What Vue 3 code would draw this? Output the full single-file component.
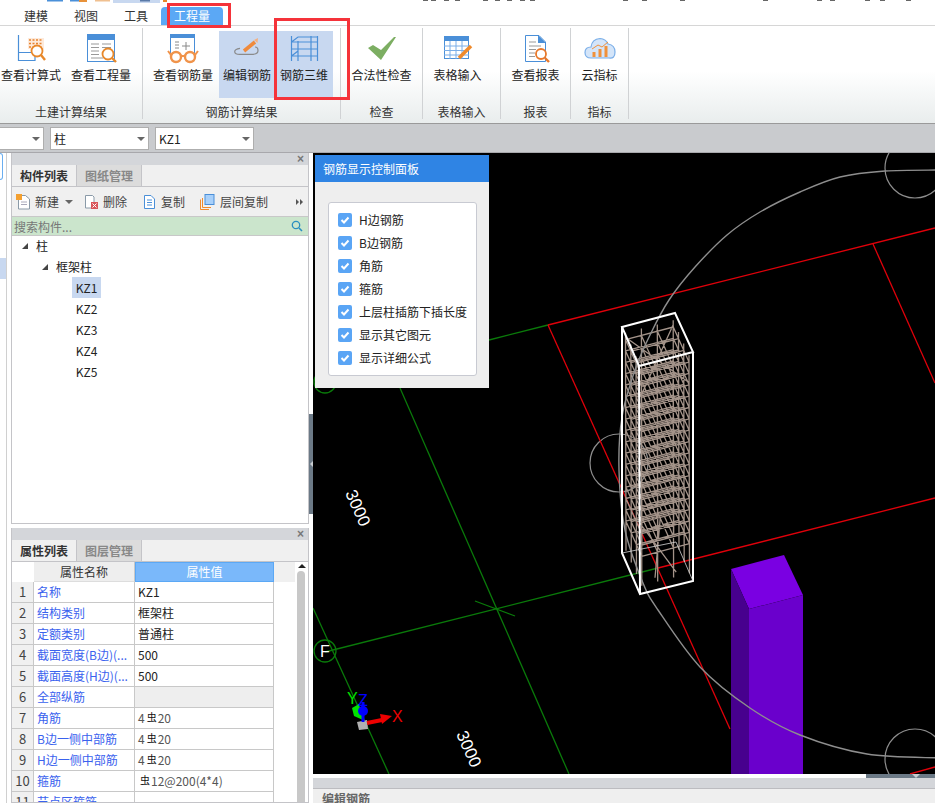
<template>
  <div class="app">
    <!-- 顶部被裁掉的标题栏残留 -->
    <svg class="title-strip" width="935" height="3" viewBox="0 0 935 3">
      <rect x="47" y="0" width="16" height="1.5" fill="#4a90d9" />
      <rect x="70" y="0" width="9" height="1.5" fill="#4a90d9" />
      <rect x="79" y="0" width="8" height="2" fill="#e8923a" />
      <rect x="95" y="0" width="15" height="1.5" fill="#f0c090" />
      <rect x="113" y="0" width="47" height="3" fill="#c8d8f0" />
      <rect x="140" y="0" width="10" height="1.5" fill="#5a7aa8" />
      <rect x="163" y="0" width="4" height="2" fill="#e8882a" />
      <rect v-for="s in titleBits" :key="s" :x="s" y="0" width="5" height="1" fill="#666" />
    </svg>

    <div class="tabs">
      <div v-for="t in tabs" :key="t" class="tab">{{ t }}</div>
      <div class="tab tab-active">工程量</div>
    </div>

    <div class="ribbon">
      <div class="rb-group g1">
        <div class="rb-btns">
          <div class="rb-btn w62">
            <svg class="ico" viewBox="0 0 32 32">
              <path d="M3.500 1V26.500H20V18.500H3.500" fill="none" stroke="#4a8fd8" stroke-width="1.200" />
              <rect x="13" y="4" width="16" height="11" fill="#fdeadb" />
              <path d="M14 6H28M14 9.500H28M14 13H28" stroke="#e8822e" stroke-width="1.600" stroke-dasharray="2 1.500" />
              <circle cx="22" cy="17" r="5.500" fill="#fff" stroke="#e8882a" stroke-width="1.800" />
              <path d="M26 21L30 26" stroke="#e8882a" stroke-width="2.400" />
            </svg>
            <span>查看计算式</span>
          </div>
          <div class="rb-btn w62">
            <svg class="ico" viewBox="0 0 32 32">
              <rect x="2.500" y="0.500" width="27" height="27" fill="#fff" stroke="#4a8fd8" />
              <rect x="2" y="0" width="28" height="6" fill="#4a8fd8" />
              <path d="M6 10H14M6 13.500H14M6 17H14M6 20.500H14M6 24H18M17 10H26M17 13.500H26" stroke="#999" />
              <circle cx="23" cy="20" r="5.500" fill="#fff" stroke="#e8882a" stroke-width="1.800" />
              <path d="M27 24L31 28" stroke="#e8882a" stroke-width="2.400" />
            </svg>
            <span>查看工程量</span>
          </div>
        </div>
        <div class="rb-label">土建计算结果</div>
      </div>

      <div class="rb-group g2">
        <div class="rb-btns">
          <div class="rb-btn w66 mr3">
            <svg class="ico" viewBox="0 0 32 32">
              <rect x="3.500" y="0.500" width="24" height="22" fill="#fff" stroke="#4a8fd8" />
              <rect x="3" y="0" width="25" height="4" fill="#4a8fd8" />
              <path d="M8 8H12M8 11H12M8 14H12M19 8V16M15 12H23" stroke="#888" />
              <circle cx="9" cy="23" r="5" fill="#fff" stroke="#f0934a" stroke-width="2.400" />
              <circle cx="23" cy="23" r="5" fill="#fff" stroke="#f0934a" stroke-width="2.400" />
              <path d="M14 22H18M4 21L1 17M28 21L31 17" stroke="#f0934a" stroke-width="2" fill="none" />
            </svg>
            <span>查看钢筋量</span>
          </div>
          <div class="rb-btn w56 hl">
            <svg class="ico" viewBox="0 0 32 32">
              <path d="M9 14.300Q3.700 15 3.700 17.700T9 20.300H22.300Q27 20 27 16.500T24 13" fill="none" stroke="#8a8a8a" stroke-width="1.200" />
              <path d="M13 17L24 8" stroke="#ef8a3c" stroke-width="3.600" />
              <path d="M23 6L27 4L26.500 9Z" fill="#f4b080" />
            </svg>
            <span>编辑钢筋</span>
          </div>
          <div class="rb-btn w58 hl">
            <svg class="ico" viewBox="0 0 32 32">
              <path d="M3.500 2V27M10 7V27M23 2V27M29.500 2V27M3.500 8H29.500M3.500 15H29.500M3.500 22H29.500M3.500 8L10 3H29.500M3.500 22L10 17" fill="none" stroke="#4a8fd8" stroke-width="1.200" />
            </svg>
            <span>钢筋三维</span>
          </div>
        </div>
        <div class="rb-label">钢筋计算结果</div>
      </div>

      <div class="rb-group g3">
        <div class="rb-btns center">
          <div class="rb-btn w62">
            <svg class="ico" viewBox="0 0 32 32">
              <polygon points="2,14 7,11 15,16 28,3 30,3 15,26" fill="#7cae62" />
            </svg>
            <span>合法性检查</span>
          </div>
        </div>
        <div class="rb-label">检查</div>
      </div>

      <div class="rb-group g4">
        <div class="rb-btns center pr8">
          <div class="rb-btn w56">
            <svg class="ico" viewBox="0 0 32 32">
              <rect x="2.500" y="2.500" width="24" height="22" fill="#fff" stroke="#4a8fd8" />
              <rect x="2" y="2" width="25" height="5" fill="#4a8fd8" />
              <path d="M2 12H27M2 16.500H27M2 21H27M8 7V25M14 7V25M20 7V25" stroke="#7aaee8" />
              <path d="M17 24L29 12" stroke="#ef8a2c" stroke-width="3.600" />
            </svg>
            <span>表格输入</span>
          </div>
        </div>
        <div class="rb-label">表格输入</div>
      </div>

      <div class="rb-group g5">
        <div class="rb-btns center">
          <div class="rb-btn w56">
            <svg class="ico" viewBox="0 0 32 32">
              <path d="M5.500 1.500H19L25.500 8V27.500H5.500Z" fill="#fff" stroke="#4a8fd8" />
              <path d="M18 1L26 9H18Z" fill="#4a8fd8" />
              <path d="M9 8H16M9 12H21M9 15.500H16M9 19H15M9 22.500H15" stroke="#999" />
              <circle cx="21" cy="20" r="5" fill="#fff" stroke="#e8782a" stroke-width="1.800" />
              <path d="M25 24L29 28" stroke="#e8782a" stroke-width="2.400" />
            </svg>
            <span>查看报表</span>
          </div>
        </div>
        <div class="rb-label">报表</div>
      </div>

      <div class="rb-group g6">
        <div class="rb-btns center">
          <div class="rb-btn w40">
            <svg class="ico" viewBox="0 0 32 32">
              <path d="M7 24Q1 24 1 18.500T7 13Q8 5 16 4.500Q22 5 24 10Q31 11 31 18T25 24Z" fill="#d4e5f9" stroke="#7aaee8" stroke-width="1.200" />
              <path d="M10 23V18M16 23V15M22 23V12" stroke="#f0913c" stroke-width="3" />
              <path d="M8 15L14 11L18 13L24 8" fill="none" stroke="#f0913c" />
            </svg>
            <span>云指标</span>
          </div>
        </div>
        <div class="rb-label">指标</div>
      </div>
    </div>

    <div class="filter-bar">
      <div class="sel sel-a"></div>
      <div class="sel sel-b">柱</div>
      <div class="sel sel-b">KZ1</div>
    </div>

    <div class="main">
      <div class="strip">
        <div class="strip-btn"></div>
        <div class="strip-sel"></div>
      </div>

      <div class="side">
        <div class="panel panel-list">
          <div class="panel-head"><span class="close">×</span></div>
          <div class="ptabs">
            <div class="ptab on">构件列表</div>
            <div class="ptab">图纸管理</div>
          </div>
          <div class="toolbar">
            <div class="tool t-new">
              <svg width="15" height="16" viewBox="0 0 15 16">
                <path d="M2.500 1.500H9.500L13.500 5V15H2.500Z" fill="#fff" stroke="#8a9aa8" />
                <path d="M5 8H11M5 10.500H11" stroke="#aab" />
                <rect x="0" y="0" width="6" height="6" fill="#f4a030" />
              </svg>
              <span>新建</span>
              <i class="caret"></i>
            </div>
            <div class="tool t-del">
              <svg width="15" height="16" viewBox="0 0 15 16">
                <path d="M1.500 1.500H8.500L10 3V14H1.500Z" fill="#fff" stroke="#8a9aa8" />
                <rect x="7" y="8" width="7" height="7" fill="#d9555a" />
                <path d="M8.500 9.500L12.500 13.500M12.500 9.500L8.500 13.500" stroke="#fff" />
              </svg>
              <span>删除</span>
            </div>
            <div class="tool t-copy">
              <svg width="13" height="16" viewBox="0 0 13 16">
                <path d="M1.500 1.500H8L11.500 5V14.500H1.500Z" fill="#fff" stroke="#4a8fd8" />
                <path d="M4 6H9M4 8.500H9M4 11H9" stroke="#4a8fd8" />
              </svg>
              <span>复制</span>
            </div>
            <div class="tool t-floor">
              <svg width="15" height="16" viewBox="0 0 15 16">
                <path d="M0.500 15.500V5.500M0.500 15.500H9M2.500 13.500V4M2.500 13.500H11" fill="none" stroke="#ef8a2c" />
                <rect x="5" y="0.500" width="9" height="10" fill="#a8d0fa" stroke="#4a8fd8" />
              </svg>
              <span>层间复制</span>
            </div>
            <i class="more"></i>
          </div>
          <div class="search">
            <span>搜索构件...</span>
            <svg width="12" height="12" viewBox="0 0 12 12">
              <circle cx="5" cy="5" r="3.700" fill="none" stroke="#2a8fc0" stroke-width="1.300" />
              <path d="M8 8L11 11" stroke="#2a8fc0" stroke-width="1.600" />
            </svg>
          </div>
          <div class="tree">
            <div class="node lv1"><i class="tw"></i>柱</div>
            <div class="node lv2"><i class="tw"></i>框架柱</div>
            <div v-for="(k, i) in columns" :key="k" class="node lv3">
              <span :class="{ picked: i === 0 }">{{ k }}</span>
            </div>
          </div>
        </div>

        <div class="panel panel-props">
          <div class="panel-head"><span class="close">×</span></div>
          <div class="ptabs">
            <div class="ptab on">属性列表</div>
            <div class="ptab">图层管理</div>
          </div>
          <div class="prop-body">
            <div class="prop-table">
              <div class="prop-head">
                <div class="c-no"></div>
                <div class="c-name">属性名称</div>
                <div class="c-val">属性值</div>
              </div>
              <div v-for="(p, i) in props" :key="p.name" class="prop-row">
                <div class="c-no">{{ i + 1 }}</div>
                <div class="c-name">{{ p.name }}</div>
                <div class="c-val" :class="{ grey: p.grey, soft: p.pre !== undefined }">
                  <template v-if="p.pre !== undefined">{{ p.pre }}<span class="bar">虫</span>{{ p.val }}</template>
                  <template v-else>{{ p.val }}</template>
                </div>
              </div>
            </div>
            <div class="scroll">
              <i class="up"></i>
              <div class="thumb"></div>
            </div>
          </div>
        </div>
      </div>

      <div class="splitter"><div class="split-grip"><i></i></div></div>

      <div class="work">
        <div class="canvas">
          <svg width="622" height="621" viewBox="313 153 622 621" class="scene">
            <!-- 轴网 -->
            <circle cx="619" cy="463" r="29" fill="none" stroke="#8e8e8e" stroke-width="1.200" />
            <circle cx="915" cy="168" r="30" fill="none" stroke="#8e8e8e" stroke-width="1.200" />
            <circle cx="915" cy="759" r="30" fill="none" stroke="#8e8e8e" stroke-width="1.200" />

            <g fill="none" stroke="#0a7a0a" stroke-width="1.300">
              <path d="M400 388L569 774" />
              <path d="M313 608L389 774" />
              <path d="M325 652L658 568" />
              <path d="M489 340L548 325" />
              <path d="M475 601L515 616" />
              <circle cx="325" cy="382" r="11" />
              <circle cx="325" cy="651" r="11" />
            </g>

            <g fill="none" stroke="#e0000a" stroke-width="1.300">
              <path d="M548 325L935 228" />
              <path d="M548 325L730 729" />
              <path d="M873 244L935 383" />
              <path d="M658 568L935 498" />
              <path d="M910 774L935 767" />
            </g>

            <path :d="rebar" fill="none" stroke="#a39389" stroke-width="1.300" />

            <!-- 紫色柱 -->
            <polygon points="731,569 784,555 803,595 749,609" fill="#7a00e2" />
            <polygon points="749,609 803,595 803,774 749,774" fill="#6a00cc" />
            <polygon points="731,569 749,609 749,774 731,774" fill="#47008e" />

            <path :d="bigCircle" fill="none" stroke="#8e8e8e" stroke-width="1.400" />

            <path d="M622 327L675 313L693 352L639 366ZM622 327V553L640 594L693 581V352M639 366L640 594" fill="none" stroke="#fff" stroke-width="2" />
            <path d="M622 553L676 542L693 581" fill="none" stroke="#d8d8d8" stroke-width="0.800" />

            <text class="dim" transform="translate(345 493) rotate(66)">3000</text>
            <text class="dim" transform="translate(456 734) rotate(66)">3000</text>
            <text class="axis" x="320" y="657" fill="#fff">F</text>

            <!-- 坐标轴 -->
            <polygon points="357,722 367,720 368,729 359,730" fill="#b0b0b0" />
            <polygon points="352,708 359,704 363,720 354,716" fill="#00e000" />
            <path d="M367 723L382 720" stroke="#ee0000" stroke-width="4" />
            <polygon points="380,714 392,716 382,724" fill="#ee0000" />
            <path d="M363 702V722" stroke="#0000ff" stroke-width="3" />
            <circle cx="363" cy="711" r="5" fill="#0000ff" />
            <text class="axis" x="347" y="704" fill="#00e000">Y</text>
            <text class="axis" x="358" y="706" fill="#0000ff">Z</text>
            <text class="axis" x="392" y="722" fill="#ee0000">X</text>
          </svg>

          <div class="float-panel">
            <div class="float-head">钢筋显示控制面板</div>
            <div class="float-body">
              <div class="check-box">
                <div v-for="c in checks" :key="c" class="check-row">
                  <svg class="check" width="14" height="14" viewBox="0 0 14 14">
                    <rect width="14" height="14" rx="2" fill="#5aa5f5" />
                    <path d="M3.500 7L6 9.500L10.500 4.500" fill="none" stroke="#fff" stroke-width="2" />
                  </svg>
                  <span>{{ c }}</span>
                </div>
              </div>
            </div>
          </div>
        </div>

        <div class="h-scroll"><div class="h-thumb"><i></i></div></div>
        <div class="edit-head"></div>
        <div class="edit-body">编辑钢筋</div>
      </div>
    </div>

    <!-- 截图上的红色标注框 -->
    <div class="mark mark-tab"></div>
    <div class="mark mark-btn"></div>
  </div>
</template>

<script setup>
const tabs = ["建模", "视图", "工具"];
const columns = ["KZ1", "KZ2", "KZ3", "KZ4", "KZ5"];
const checks = ["H边钢筋", "B边钢筋", "角筋", "箍筋", "上层柱插筋下插长度", "显示其它图元", "显示详细公式"];
const titleBits = [423, 431, 444, 455, 483, 495, 507, 520, 530, 623, 642, 680, 763, 817, 830, 865, 880, 906];

const props = [
  { name: "名称", val: "KZ1" },
  { name: "结构类别", val: "框架柱" },
  { name: "定额类别", val: "普通柱" },
  { name: "截面宽度(B边)(...", val: "500" },
  { name: "截面高度(H边)(...", val: "500" },
  { name: "全部纵筋", val: "", grey: true },
  { name: "角筋", pre: "4", val: "20" },
  { name: "B边一侧中部筋", pre: "4", val: "20" },
  { name: "H边一侧中部筋", pre: "4", val: "20" },
  { name: "箍筋", pre: "", val: "12@200(4*4)" },
  { name: "节点区箍筋", val: "" },
];

// 大圆（投影后是椭圆），用 Catmull-Rom 穿过取样点
const circlePts = [
  [940, 170], [885, 171], [840, 177], [800, 192], [760, 212], [727, 235], [695, 267],
  [669, 300], [650, 335], [635, 370], [622, 417], [619, 470], [625, 530], [643, 583],
  [658, 610], [700, 667], [750, 708], [800, 735], [867, 754], [940, 758],
];

function spline(pts) {
  let d = `M${pts[0][0]} ${pts[0][1]}`;
  for (let i = 0; i < pts.length - 1; i++) {
    const p0 = pts[Math.max(i - 1, 0)];
    const p1 = pts[i];
    const p2 = pts[i + 1];
    const p3 = pts[Math.min(i + 2, pts.length - 1)];
    const c1x = p1[0] + (p2[0] - p0[0]) / 6;
    const c1y = p1[1] + (p2[1] - p0[1]) / 6;
    const c2x = p2[0] - (p3[0] - p1[0]) / 6;
    const c2y = p2[1] - (p3[1] - p1[1]) / 6;
    d += `C${c1x.toFixed(1)} ${c1y.toFixed(1)} ${c2x.toFixed(1)} ${c2y.toFixed(1)} ${p2[0]} ${p2[1]}`;
  }
  return d;
}
const bigCircle = spline(circlePts);

// 钢筋笼：柱内的纵筋 + 每层箍筋
function pt(u, v, t) {
  const x = 622 + u * 53 + v * 17.5 + t * 0.5;
  const y = 327 - u * 14 + v * 39 + t * 227;
  return `${x.toFixed(1)} ${y.toFixed(1)}`;
}
function buildRebar() {
  const grid = [0.05, 0.35, 0.65, 0.95];
  let d = "";
  for (const u of grid) {
    for (const v of grid) {
      if (u === 0.05 || u === 0.95 || v === 0.05 || v === 0.95) {
        d += `M${pt(u, v, 0.02)}L${pt(u, v, 0.98)}`;
      }
    }
  }
  for (let t = 0.05; t < 0.87; t += 0.05) {
    for (const g of grid) {
      d += `M${pt(0.05, g, t)}L${pt(0.95, g, t)}`;
      d += `M${pt(g, 0.05, t)}L${pt(g, 0.95, t)}`;
    }
  }
  // 顶部和底部的斜向钢筋
  d += `M${pt(0.05, 0.05, 0.04)}L${pt(0.95, 0.95, 0.14)}M${pt(0.95, 0.05, 0.04)}L${pt(0.05, 0.95, 0.14)}`;
  d += `M${pt(0.3, 0.05, 0.87)}L${pt(0.7, 0.95, 0.96)}M${pt(0.7, 0.05, 0.87)}L${pt(0.3, 0.95, 0.96)}`;
  return d;
}
const rebar = buildRebar();
</script>

<style scoped>
.app {
  position: relative;
  width: 935px;
  height: 803px;
  overflow: hidden;
  display: flex;
  flex-direction: column;
  background: #fff;
  color: #222;
  font-family: "Noto Sans CJK SC", "Liberation Sans", sans-serif;
  font-size: 12px;
}
.title-strip {
  display: block;
  flex: none;
}

/* 页签 */
.tabs {
  flex: none;
  height: 23px;
  padding-left: 11px;
  display: flex;
  align-items: flex-end;
  border-bottom: 1px solid #d6d6d6;
  box-sizing: border-box;
}
.tab {
  width: 50px;
  height: 18px;
  line-height: 18px;
  text-align: center;
  color: #333;
}
.tab-active {
  width: 62px;
  background: #5ba8f5;
  color: #fff;
  border-radius: 4px 4px 0 0;
}

/* 功能区 */
.ribbon {
  flex: none;
  height: 97px;
  display: flex;
  background: linear-gradient(#fff 0, #fff 45px, #e9eded 97px);
  box-sizing: border-box;
  padding-top: 2px;
}
.rb-group {
  height: 91px;
  box-sizing: border-box;
  border-right: 1px solid #d0d2d4;
  display: flex;
  flex-direction: column;
}
.g1 { width: 143px; }
.g2 { width: 198px; padding-left: 7px; }
.g3 { width: 82px; }
.g4 { width: 78px; }
.g5 { width: 70px; }
.g6 { width: 58px; }
.rb-btns {
  height: 67px;
  margin-top: 3px;
  display: flex;
}
.g1 .rb-btns { gap: 8px; }
.center { justify-content: center; }
.pr8 { padding-right: 8px; }
.mr3 { margin-right: 3px; }
.rb-btn {
  flex: none;
  height: 67px;
  display: flex;
  flex-direction: column;
  align-items: center;
  padding-top: 3px;
  box-sizing: border-box;
  white-space: nowrap;
  line-height: 16px;
}
.rb-btn span { margin-top: 1px; }
.w40 { width: 40px; }
.w56 { width: 56px; }
.w58 { width: 58px; }
.w62 { width: 62px; }
.w66 { width: 66px; }
.hl { background: #c8d8f0; }
.ico {
  width: 32px;
  height: 32px;
  flex: none;
}
.rb-label {
  text-align: center;
  line-height: 16px;
  margin-top: 6px;
  color: #333;
  white-space: nowrap;
}
.g2 .rb-label { margin-left: -7px; }

/* 构件筛选栏 */
.filter-bar {
  flex: none;
  height: 30px;
  box-sizing: border-box;
  background: #c9cbce;
  border-top: 1px solid #9a9a9a;
  border-bottom: 1px solid #a8a8ac;
  display: flex;
  align-items: center;
  gap: 6px;
}
.sel {
  position: relative;
  height: 23px;
  line-height: 21px;
  box-sizing: border-box;
  background: #fff;
  border: 1px solid #aeaeae;
  padding-left: 3px;
}
.sel::after {
  content: "";
  position: absolute;
  right: 3px;
  top: 9px;
  border: 4px solid transparent;
  border-top-color: #666;
}
.sel-a { width: 45px; margin-left: -1px; }
.sel-b { width: 99px; }

/* 主区域 */
.main {
  flex: 1;
  min-height: 0;
  display: flex;
}
.strip {
  flex: none;
  width: 11px;
  box-sizing: border-box;
  position: relative;
  background: #fff;
}
.strip::after {
  content: "";
  position: absolute;
  left: 6px;
  top: 0;
  bottom: 0;
  border-left: 1px solid #d0d0d0;
}
.strip-btn {
  height: 27px;
  width: 3px;
  box-sizing: border-box;
  border: 1px solid #6aaef0;
  border-left: none;
  border-radius: 0 3px 3px 0;
}
.strip-sel {
  margin-top: 78px;
  width: 6px;
  height: 21px;
  background: #c8d8f0;
}
.side {
  flex: none;
  width: 298px;
  display: flex;
  flex-direction: column;
  gap: 4px;
}
.panel {
  box-sizing: border-box;
  border: 1px solid #c4c4c8;
  border-top: none;
  background: #fff;
  display: flex;
  flex-direction: column;
  overflow: hidden;
}
.panel-list { height: 371px; }
.panel-props { flex: 1; min-height: 0; }
.panel-head {
  flex: none;
  height: 12px;
  background: #d4d6da;
  position: relative;
}
.close {
  position: absolute;
  right: 4px;
  top: 0;
  font-size: 12px;
  line-height: 12px;
  color: #777;
  font-family: "Liberation Sans", sans-serif;
  font-weight: bold;
}
.ptabs {
  flex: none;
  height: 22px;
  background: #f0f0f0;
  display: flex;
  border-bottom: 1px solid #c4c4c8;
  box-sizing: border-box;
}
.ptab {
  width: 65px;
  text-align: center;
  line-height: 21px;
  color: #888;
  font-weight: 700;
  background: #dcdcdc;
  border-right: 1px solid #c4c4c8;
  box-sizing: border-box;
}
.ptab.on {
  background: #f0f0f0;
  color: #333;
}
.toolbar {
  flex: none;
  height: 30px;
  background: #f0f0f0;
  border-bottom: 1px solid #c8c8c8;
  box-sizing: border-box;
  display: flex;
  align-items: center;
  position: relative;
}
.tool {
  display: flex;
  align-items: center;
  gap: 4px;
  color: #444;
  white-space: nowrap;
}
.t-new { margin-left: 4px; }
.t-del { margin-left: 11px; gap: 4px; }
.t-copy { margin-left: 16px; gap: 5px; }
.t-floor { margin-left: 15px; gap: 5px; }
.caret {
  border: 4px solid transparent;
  border-top-color: #666;
  margin: 4px 0 0 2px;
}
.more {
  position: absolute;
  right: 2px;
  top: 12px;
  width: 0;
  height: 0;
  border: 3px solid transparent;
  border-left: 3px solid #555;
}
.more::before {
  content: "";
  position: absolute;
  left: -7px;
  top: -3px;
  border: 3px solid transparent;
  border-left: 3px solid #555;
}
.search {
  flex: none;
  height: 19px;
  padding: 0 5px 0 2px;
  background: #cbe5cc;
  border-bottom: 1px solid #c8c8c8;
  box-sizing: border-box;
  display: flex;
  align-items: center;
  justify-content: space-between;
  color: #777;
}
.tree {
  margin-top: -1px;
  flex: 1;
}
.node {
  height: 21px;
  line-height: 21px;
  position: relative;
  color: #222;
}
.lv1 { padding-left: 24px; }
.lv2 { padding-left: 44px; }
.lv3 { padding-left: 60px; }
.tw {
  position: absolute;
  width: 0;
  height: 0;
  top: 8px;
  margin-left: -14px;
  border-style: solid;
  border-width: 0 0 6px 6px;
  border-color: transparent transparent #444 transparent;
}
.lv3 span {
  display: block;
  width: 29px;
  text-align: center;
}
.picked { background: #c8d8f0; }

/* 属性表 */
.prop-body {
  flex: 1;
  min-height: 0;
  display: flex;
  overflow: hidden;
}
.prop-table {
  flex: none;
  width: 283px;
}
.prop-head {
  display: flex;
  height: 20px;
  background: #f0f0f0;
}
.prop-head .c-no {
  background: #fff;
  border: none;
}
.prop-head .c-name {
  text-align: center;
  background: #eee;
  color: #333;
  padding: 0;
  border-bottom: 1px solid #ddd;
}
.prop-head .c-val {
  background: #7ab8fa;
  border: 1px solid #5ba8f5;
  color: #fff;
  text-align: center;
  padding: 0;
  line-height: 18px;
}
.prop-row {
  display: flex;
  height: 21px;
}
.c-no {
  flex: none;
  width: 22px;
  box-sizing: border-box;
  text-align: center;
  background: #f0f0f0;
  border-right: 1px solid #c8c8c8;
  border-bottom: 1px solid #c8c8c8;
  color: #444;
  font-size: 13px;
  line-height: 20px;
}
.c-name {
  flex: none;
  width: 101px;
  box-sizing: border-box;
  padding-left: 3px;
  border-right: 1px solid #c8c8c8;
  border-bottom: 1px solid #c8c8c8;
  color: #3a62ee;
  line-height: 20px;
  white-space: nowrap;
  overflow: hidden;
}
.c-val {
  flex: none;
  width: 139px;
  box-sizing: border-box;
  padding-left: 3px;
  border-right: 1px solid #c8c8c8;
  border-bottom: 1px solid #c8c8c8;
  color: #222;
  line-height: 20px;
  white-space: nowrap;
}
.c-val.grey { background: #eee; }
.c-val.soft { color: #555; }
.bar {
  font-size: 10px;
  line-height: 10px;
  color: #111;
  position: relative;
  top: -2px;
  margin: 0 1px 0 2px;
}
.scroll {
  flex: 1;
  position: relative;
}
.up {
  position: absolute;
  left: 3px;
  top: 2px;
  border: 4px solid transparent;
  border-top: none;
  border-bottom: 4px solid #222;
}
.thumb {
  position: absolute;
  left: 2px;
  top: 9px;
  width: 8px;
  height: 400px;
  border-radius: 4px;
  background: #c8c8c8;
}

.splitter {
  flex: none;
  width: 4px;
  padding-top: 261px;
  background: #fff;
}
.split-grip {
  height: 100px;
  background: #6b7986;
  display: flex;
  align-items: center;
}
.split-grip i {
  border: 3px solid transparent;
  border-right: 3px solid #c8ccd0;
  margin-left: -2px;
}

/* 三维视口 */
.work {
  flex: 1;
  min-width: 0;
  display: flex;
  flex-direction: column;
}
.canvas {
  flex: none;
  height: 621px;
  position: relative;
  background: #000;
  overflow: hidden;
}
.scene {
  display: block;
}
.dim {
  fill: #fff;
  font-family: "Liberation Sans", sans-serif;
  font-size: 17px;
}
.axis {
  font-family: "Liberation Sans", sans-serif;
  font-size: 16px;
}
.float-panel {
  position: absolute;
  left: 2px;
  top: 2px;
  width: 174px;
  height: 233px;
  background: #eee;
}
.float-head {
  height: 27px;
  line-height: 27px;
  padding-left: 8px;
  background: #2f84e4;
  color: #fff;
}
.float-body {
  padding: 20px 12px 0 13px;
}
.check-box {
  height: 174px;
  box-sizing: border-box;
  padding-top: 5px;
  background: #fff;
  border: 1px solid #c8cad2;
  border-radius: 3px;
}
.check-row {
  display: flex;
  align-items: center;
  height: 23px;
  padding-left: 9px;
  gap: 7px;
  white-space: nowrap;
}
.check { flex: none; }
.h-scroll {
  flex: none;
  height: 4px;
  background: #fff;
  display: flex;
  justify-content: flex-end;
}
.h-thumb {
  width: 69px;
  background: #6b7986;
  position: relative;
}
.h-thumb i {
  position: absolute;
  left: 46px;
  top: 0;
  border: 4px solid transparent;
  border-top: 4px solid #c8ccd0;
}
.edit-head {
  flex: none;
  height: 11px;
  background: #d4d6da;
  border-bottom: 1px solid #bcbcc0;
  box-sizing: border-box;
}
.edit-body {
  flex: 1;
  background: #efefef;
  color: #666;
  font-weight: 700;
  padding-left: 9px;
  line-height: 19px;
}

/* 红框标注 */
.mark {
  position: absolute;
  box-sizing: border-box;
  border: 3px solid #f5333a;
}
.mark-tab {
  left: 167px;
  top: 3px;
  width: 64px;
  height: 25px;
}
.mark-btn {
  left: 274px;
  top: 18px;
  width: 76px;
  height: 82px;
}
</style>

<style>
html, body {
  margin: 0;
  overflow: hidden;
}
</style>
